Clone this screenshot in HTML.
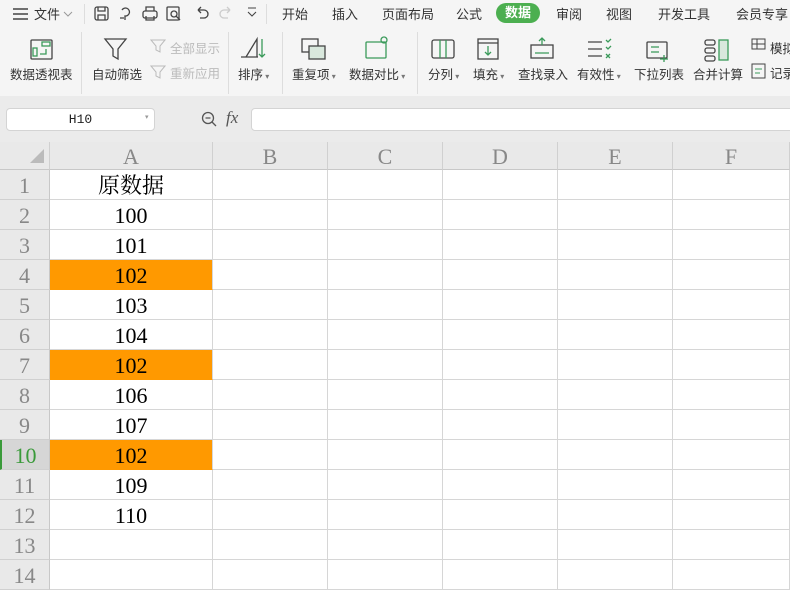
<!DOCTYPE html>
<html><head><meta charset="utf-8"><style>
*{margin:0;padding:0;box-sizing:border-box}
body{width:790px;height:593px;overflow:hidden;background:#fff;font-family:"Liberation Sans","Noto Sans CJK SC",sans-serif;position:relative}
.abs{position:absolute}
.top{left:0;top:0;width:790px;height:96px;background:#f5f5f5}
.tab{position:absolute;top:4px;font-size:13px;color:#333}
.lbl{position:absolute;font-size:12.5px;color:#333;white-space:nowrap}
.dis{color:#bbb}
.sep{position:absolute;width:1px;background:#ddd}
.fbar{left:0;top:96px;width:790px;height:46px;background:#ebebeb}
.ch{position:absolute;top:142px;height:28px;background:#e9e9e9;border-right:1px solid #d0d0d0;border-bottom:1px solid #c8c8c8;font-family:"Liberation Serif",serif;font-size:22px;color:#888;text-align:center;line-height:30px}
.rh{position:absolute;left:0;width:50px;height:30px;background:#e9e9e9;border-right:1px solid #c8c8c8;border-bottom:1px solid #d0d0d0;font-family:"Liberation Serif",serif;font-size:22px;color:#888;text-align:center;line-height:32px}
.cell{position:absolute;height:30px;border-right:1px solid #d6d6d6;border-bottom:1px solid #d6d6d6;font-family:"Liberation Serif","Noto Serif CJK SC",serif;font-size:22px;color:#000;text-align:center;line-height:32px}
svg{position:absolute}
</style></head><body>
<div class="abs top"></div>
<svg style="left:12px;top:7px" width="18" height="14"><path d="M1 2h15M1 7h15M1 12h15" stroke="#444" stroke-width="1.4"/></svg>
<div class="tab" style="left:34px">文件</div>
<svg style="left:63px;top:10px" width="10" height="8"><path d="M1 2l4 4 4-4" stroke="#999" fill="none"/></svg>
<div class="sep" style="left:84px;top:4px;height:20px"></div>
<svg style="left:94px;top:6px" width="170" height="16" fill="none" stroke="#444" stroke-width="1.3">
<rect x="1" y="1" width="13" height="13" rx="2"/><path d="M4 1v4h7V1M4 14v-5h7v5"/>
<path d="M28 4a4 4 0 1 1 3 6v4M26 12h4"/>
<rect x="49" y="5" width="14" height="7" rx="2"/><path d="M52 5V1h8v4M52 10v4h8v-4"/>
<rect x="73" y="1" width="12" height="13" rx="1"/><circle cx="80" cy="8" r="3"/><path d="M82 10l4 4"/>
<path d="M104 4h6a4 4 0 0 1 0 8h-4M104 4l3-3M104 4l3 3"/>
<path d="M136 4h-6a4 4 0 0 0 0 8h4M136 4l-3-3M136 4l-3 3" stroke="#ccc"/>
<path d="M154 6l4 4 4-4M154 2h8" stroke-width="1.1"/>
</svg>
<div class="sep" style="left:266px;top:4px;height:20px"></div>
<div class="tab" style="left:282px">开始</div>
<div class="tab" style="left:332px">插入</div>
<div class="tab" style="left:382px">页面布局</div>
<div class="tab" style="left:456px">公式</div>
<div class="abs" style="left:496px;top:3px;width:44px;height:20px;border-radius:10px;background:#4caf50;color:#fff;font-size:13px;text-align:center;line-height:20px;font-weight:bold">数据</div>
<div class="tab" style="left:556px">审阅</div>
<div class="tab" style="left:606px">视图</div>
<div class="tab" style="left:658px">开发工具</div>
<div class="tab" style="left:736px">会员专享</div>
<svg style="left:0;top:34px" width="790" height="28" fill="none" stroke="#444" stroke-width="1.3">
<rect x="31" y="6" width="21" height="19" rx="1"/><rect x="42" y="8" width="8" height="4" stroke="#3a9a5a"/><rect x="33" y="14" width="4" height="8" stroke="#3a9a5a"/><path d="M40 20h6v-5" stroke="#3a9a5a"/>
<path d="M105 5h21l-8 10v10l-5-3v-7z"/>
<path d="M246 23l11-18v18zM241 23h17" /><path d="M262 5v18M259 20l3 3 3-3" stroke="#3a9a5a"/>
<rect x="302" y="5" width="16" height="13"/><rect x="309" y="12" width="16" height="13" fill="#d9e8dd" stroke="#444"/>
<rect x="366" y="8" width="20" height="16" rx="1" stroke="#3a9a5a"/><circle cx="384" cy="6" r="3" stroke="#3a9a5a"/>
<rect x="432" y="6" width="22" height="18" rx="2"/><path d="M440 6v18M446 6v18" stroke="#3a9a5a"/>
<rect x="478" y="5" width="20" height="20"/><path d="M478 9h20"/><path d="M488 12v9M485 18l3 3 3-3" stroke="#3a9a5a"/>
<rect x="531" y="11" width="22" height="13"/><path d="M535 19h14M542 11V4M539 7l3-3 3 3" stroke="#3a9a5a"/>
<path d="M588 8h14M588 15h14M588 22h14"/><path d="M606 6l2 2 3-3M606 13l2 2 3-3M606 20l4 4M610 20l-4 4" stroke="#3a9a5a"/>
<rect x="647" y="8" width="20" height="16" rx="1"/><path d="M651 13h8M651 18h8M664 21v8M660 25h8" stroke="#3a9a5a"/>
<rect x="705" y="6" width="10" height="5" rx="2"/><rect x="705" y="14" width="10" height="5" rx="2"/><rect x="705" y="22" width="10" height="5" rx="2"/><rect x="719" y="6" width="9" height="20" fill="#d9e8dd" stroke="#3a9a5a"/>
</svg>
<div class="lbl" style="left:10px;top:64px">数据透视表</div>
<div class="sep" style="left:81px;top:32px;height:62px"></div>
<div class="lbl" style="left:92px;top:64px">自动筛选</div>
<div class="lbl dis" style="left:170px;top:38px">全部显示</div>
<div class="lbl dis" style="left:170px;top:63px">重新应用</div>
<svg style="left:150px;top:38px" width="16" height="46" fill="none" stroke="#bbb"><path d="M1 2h14l-5 6v6l-4-2V8z"/><path d="M1 28h14l-5 6v6l-4-2v-4z"/></svg>
<div class="sep" style="left:228px;top:32px;height:62px"></div>
<div class="lbl" style="left:238px;top:64px">排序<span style="font-size:8px;color:#777"> ▾</span></div>
<div class="sep" style="left:282px;top:32px;height:62px"></div>
<div class="lbl" style="left:292px;top:64px">重复项<span style="font-size:8px;color:#777"> ▾</span></div>
<div class="lbl" style="left:349px;top:64px">数据对比<span style="font-size:8px;color:#777"> ▾</span></div>
<div class="sep" style="left:417px;top:32px;height:62px"></div>
<div class="lbl" style="left:428px;top:64px">分列<span style="font-size:8px;color:#777"> ▾</span></div>
<div class="lbl" style="left:473px;top:64px">填充<span style="font-size:8px;color:#777"> ▾</span></div>
<div class="lbl" style="left:518px;top:64px">查找录入</div>
<div class="lbl" style="left:577px;top:64px">有效性<span style="font-size:8px;color:#777"> ▾</span></div>
<div class="lbl" style="left:634px;top:64px">下拉列表</div>
<div class="lbl" style="left:693px;top:64px">合并计算</div>
<div class="lbl" style="left:770px;top:38px">模拟</div>
<div class="lbl" style="left:770px;top:63px">记录</div>
<svg style="left:751px;top:38px" width="18" height="44" fill="none" stroke="#444"><rect x="1" y="1" width="13" height="10"/><path d="M1 6h13M6 1v10"/><rect x="1" y="26" width="13" height="14" stroke="#444"/><path d="M4 31h7M4 35h5" stroke="#3a9a5a"/></svg>
<div class="abs" style="left:0;top:96px;width:790px;height:4px;background:#e2e2e2"></div>
<div class="abs fbar"></div>
<div class="abs" style="left:6px;top:108px;width:149px;height:23px;background:#fff;border:1px solid #d4d4d4;border-radius:4px;font-family:'Liberation Mono',monospace;font-size:13px;text-align:center;line-height:21px;color:#222">H10</div>
<div class="abs" style="left:145px;top:113px;font-size:7px;color:#999">▾</div>
<svg style="left:200px;top:111px" width="20" height="18" fill="none" stroke="#555" stroke-width="1.3"><circle cx="8" cy="7" r="5.5"/><path d="M5.5 7h5M12 11l4 4"/></svg>
<div class="abs" style="left:226px;top:108px;font-family:'Liberation Serif',serif;font-style:italic;font-size:17px;color:#555">fx</div>
<div class="abs" style="left:251px;top:108px;width:545px;height:23px;background:#fff;border:1px solid #d4d4d4;border-radius:4px"></div>
<div class="ch" style="left:0;width:50px"></div>
<svg style="left:30px;top:149px" width="16" height="16"><path d="M14 0V14H0Z" fill="#bbb"/></svg>
<div class="ch" style="left:50px;width:163px">A</div>
<div class="ch" style="left:213px;width:115px">B</div>
<div class="ch" style="left:328px;width:115px">C</div>
<div class="ch" style="left:443px;width:115px">D</div>
<div class="ch" style="left:558px;width:115px">E</div>
<div class="ch" style="left:673px;width:117px">F</div>
<div id="rows"></div>
<script>
var v=["原数据","100","101","102","103","104","102","106","107","102","109","110","",""];
var h="",cols=[[213,115],[328,115],[443,115],[558,115],[673,117]];
for(var i=0;i<14;i++){var y=170+i*30;var o=(i==3||i==6||i==9);
h+='<div class="rh" style="top:'+y+'px;'+(i==9?'background:#d6d6d6;color:#3a9a3a;border-left:2px solid #3a9a3a':'')+'">'+(i+1)+'</div>';
h+='<div class="cell" style="left:50px;width:163px;top:'+y+'px;'+(o?'background:#ff9900;border-bottom-color:#ff9900;':'')+'">'+v[i]+'</div>';
for(var c=0;c<5;c++)h+='<div class="cell" style="left:'+cols[c][0]+'px;width:'+cols[c][1]+'px;top:'+y+'px"></div>';}
document.getElementById("rows").innerHTML=h;
</script>
</body></html>
